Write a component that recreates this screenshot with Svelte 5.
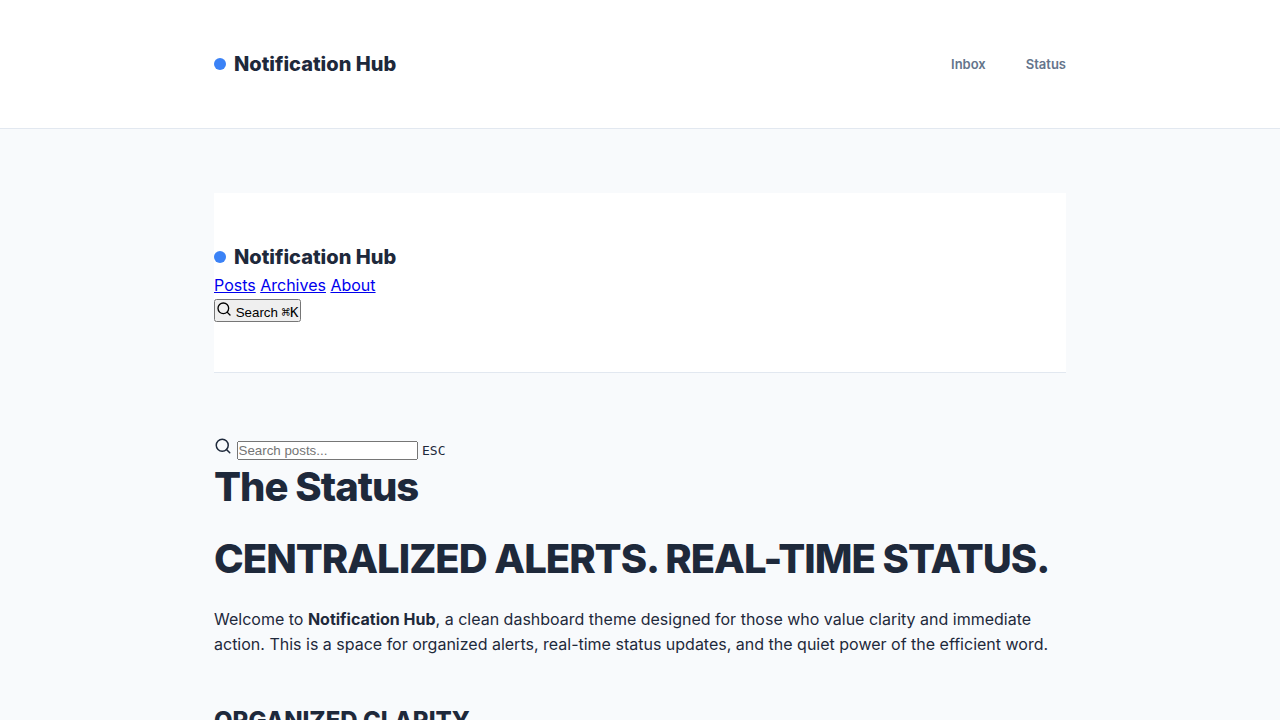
<script lang="ts">
	let query = $state('');
	let searchInput: HTMLInputElement;

	const links = [
		{ label: 'Posts', href: '#posts' },
		{ label: 'Archives', href: '#archives' },
		{ label: 'About', href: '#about' }
	];

	const openSearch = () => {
		searchInput.focus();
	};
</script>

{#snippet logo()}
	<a class="logo" href="#home"><span class="dot"></span>Notification Hub</a>
{/snippet}

{#snippet searchIcon(size: number)}
	<svg
		width={size}
		height={size}
		viewBox="0 0 24 24"
		fill="none"
		stroke="currentColor"
		stroke-width="2"
		stroke-linecap="round"
		stroke-linejoin="round"
		aria-hidden="true"
	>
		<circle cx="11" cy="11" r="8" />
		<path d="m21 21-4.35-4.35" />
	</svg>
{/snippet}

<header class="site-header">
	<div class="container header-inner">
		{@render logo()}
		<nav class="site-nav">
			<a href="#inbox">Inbox</a>
			<a href="#status">Status</a>
		</nav>
	</div>
</header>

<main class="container">
	<header class="inner-header">
		{@render logo()}
		<nav>
			{#each links as link}
				<a href={link.href}>{link.label}</a>{' '}
			{/each}
		</nav>
		<button type="button" onclick={openSearch}>
			{@render searchIcon(16)}
			<span>Search</span>
			<kbd>⌘K</kbd>
		</button>
	</header>

	<div class="search">
		{@render searchIcon(18)}
		<input
			bind:this={searchInput}
			bind:value={query}
			type="text"
			placeholder="Search posts..."
			aria-label="Search posts"
		/>
		<kbd>ESC</kbd>
	</div>

	<article>
		<h1>The Status</h1>
		<h1 class="upper">Centralized Alerts. Real-Time Status.</h1>
		<p>
			Welcome to <strong>Notification Hub</strong>, a clean dashboard theme designed for those who
			value clarity and immediate action. This is a space for organized alerts, real-time status
			updates, and the quiet power of the efficient word.
		</p>
		<h2 class="upper">Organized Clarity</h2>
	</article>
</main>

<style>
	* {
		box-sizing: border-box;
		margin: 0;
		padding: 0;
	}

	:global(body) {
		background: #f8fafc;
		color: #1e293b;
		font-family: Inter, sans-serif;
		font-size: 16px;
		line-height: 1.6;
	}

	.container {
		width: calc(100% - 48px);
		max-width: 852px;
		margin: 0 auto;
	}

	.site-header,
	.inner-header {
		padding: 48px 0;
		background: #fff;
		border-bottom: 1px solid #e2e8f0;
	}

	.inner-header {
		margin: 64px 0;
	}

	.header-inner {
		display: flex;
		justify-content: space-between;
		align-items: center;
	}

	.logo {
		display: flex;
		align-items: center;
		gap: 8px;
		color: #1e293b;
		font-size: 20px;
		font-weight: 800;
		text-decoration: none;
	}

	.dot {
		width: 12px;
		height: 12px;
		border-radius: 50%;
		background: #3b82f6;
	}

	.site-nav {
		display: flex;
		gap: 40px;
	}

	.site-nav a {
		color: #64748b;
		font-size: 13px;
		font-weight: 600;
		text-decoration: none;
	}

	button,
	input {
		font-family: 'Liberation Sans', Arial, sans-serif;
	}

	kbd {
		font-family: 'DejaVu Sans Mono', monospace;
		font-size: 13px;
	}

	button kbd {
		font-size: 14px;
	}

	h1 {
		margin: 0 0 24px;
		font-size: 40px;
		font-weight: 800;
		line-height: 48px;
		letter-spacing: -1px;
	}

	h2 {
		margin: 48px 0 16px;
		font-size: 24px;
		font-weight: 800;
		line-height: 30px;
	}

	.upper {
		text-transform: uppercase;
	}
</style>
